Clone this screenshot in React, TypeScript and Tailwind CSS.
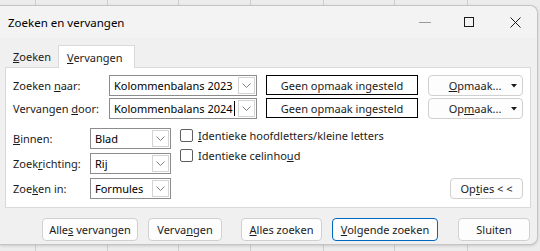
import React from "react";

const Chevron = () => (
  <svg width="9" height="5" viewBox="0 0 9 5">
    <path d="M0.5 0.5 L4.5 4.5 L8.5 0.5" fill="none" stroke="#808080" strokeWidth="1" />
  </svg>
);

function Combo({ value, className, caret }: { value: string; className: string; caret?: boolean }) {
  return (
    <div className={`flex h-[21px] border border-[#8c8c8c] bg-white ${className}`}>
      <div className="flex flex-1 items-center pl-[4px] text-black">
        <span className="whitespace-nowrap">{value}</span>
        {caret && <span className="ml-[1px] h-[15px] w-px bg-black" />}
      </div>
      <div className="my-px mr-px flex w-[17px] items-center justify-center border border-[#d4d4d4] bg-white">
        <Chevron />
      </div>
    </div>
  );
}

function Btn({ children, className }: { children: React.ReactNode; className: string }) {
  return (
    <div className={`flex h-[23px] items-center justify-center rounded-[4px] border bg-[#fdfdfd] ${className}`}>
      {children}
    </div>
  );
}

function Check({ children }: { children: React.ReactNode }) {
  return (
    <div className="flex h-[20px] items-center">
      <div className="h-[13px] w-[13px] rounded-[2px] border border-[#5f5f5f] bg-white" />
      <span className="ml-[5px] whitespace-nowrap">{children}</span>
    </div>
  );
}

export default function App() {
  return (
    <div className="relative h-[251px] w-[540px] overflow-hidden bg-[#ececec] font-['Noto_Sans',sans-serif] text-[11px] leading-none text-[#1b1b1b]">
      <div className="absolute inset-0 flex">
        <div className="h-full w-[36px] border-r border-[#cdcdcd]" />
        <div className="h-full w-[72px] border-r border-[#cdcdcd]" />
        <div className="h-full w-[71px] border-r border-[#cdcdcd]" />
        <div className="h-full w-[72px] border-r border-[#cdcdcd]" />
        <div className="h-full w-[73px] border-r border-[#cdcdcd]" />
        <div className="h-full w-[71px] border-r border-[#cdcdcd]" />
        <div className="h-full w-[73px] border-r border-[#cdcdcd]" />
      </div>

      <div className="absolute left-0 top-[5px] flex h-[240px] w-[538px] flex-col rounded-r-[8px] border border-l-0 border-[#c4c4c4] bg-[#f0f0f0] shadow-[0_1px_3px_rgba(0,0,0,0.15)]">
        {/* title bar */}
        <div className="flex h-[32px] shrink-0 items-center rounded-tr-[8px] bg-[#f3f3f3]">
          <span className="ml-[8px] mt-[1px] text-[11.5px] text-black">Zoeken en vervangen</span>
          <div className="ml-auto flex items-center">
            <div className="mr-[33px] h-px w-[12px] bg-[#9a9a9a]" />
            <div className="mr-[36px] h-[10px] w-[10px] border border-[#1b1b1b]" />
            <svg width="11" height="11" viewBox="0 0 11 11" className="mr-[16px]">
              <path d="M0.5 0.5 L10.5 10.5 M10.5 0.5 L0.5 10.5" stroke="#1b1b1b" strokeWidth="1" />
            </svg>
          </div>
        </div>

        {/* tabs */}
        <div className="mt-[6px] flex h-[23px] items-end pl-[5px]">
          <div className="flex h-[22px] w-[53px] items-center pl-[8px]">
            <span><u>Z</u>oeken</span>
          </div>
          <div className="relative z-10 -mb-px flex h-[23px] w-[77px] items-center border border-b-0 border-[#d9d9d9] bg-white pl-[8px]">
            <span><u>V</u>ervangen</span>
          </div>
        </div>

        {/* panel */}
        <div className="mx-[5px] flex h-[141px] w-[526px] flex-col border border-[#d9d9d9] bg-white pl-[7px] pt-[7px]">
          <div className="flex h-[21px] items-center">
            <span className="w-[96px]">Zoeken <u>n</u>aar:</span>
            <Combo value="Kolommenbalans 2023" className="w-[148px]" />
            <div className="ml-[9px] flex h-[20px] w-[152px] items-center justify-center self-start border border-black">
              <span>Geen opmaak ingesteld</span>
            </div>
            <Btn className="ml-[10px] w-[95px] border-[#d0d0d0] !h-[21px]">
              <span className="flex-1 pl-[10px] text-center"><u>O</u>pmaak...</span>
              <svg width="6" height="4" viewBox="0 0 6 4" className="mr-[5px]">
                <path d="M0 0 L6 0 L3 3.5 Z" fill="#1b1b1b" />
              </svg>
            </Btn>
          </div>
          <div className="mt-[2px] flex h-[21px] items-center">
            <span className="w-[96px]">Vervangen <u>d</u>oor:</span>
            <Combo value="Kolommenbalans 2024" className="w-[148px]" caret />
            <div className="ml-[9px] flex h-[20px] w-[152px] items-center justify-center self-start border border-black">
              <span>Geen opmaak ingesteld</span>
            </div>
            <Btn className="ml-[10px] w-[95px] border-[#d0d0d0] !h-[21px]">
              <span className="flex-1 pl-[10px] text-center">Op<u>m</u>aak...</span>
              <svg width="6" height="4" viewBox="0 0 6 4" className="mr-[5px]">
                <path d="M0 0 L6 0 L3 3.5 Z" fill="#1b1b1b" />
              </svg>
            </Btn>
          </div>

          <div className="mt-[9px] flex">
            <div className="flex flex-col gap-[4px]">
              <div className="flex items-center">
                <span className="w-[77px]"><u>B</u>innen:</span>
                <Combo value="Blad" className="w-[81px]" />
              </div>
              <div className="flex items-center">
                <span className="w-[77px]">Zoek<u>r</u>ichting:</span>
                <Combo value="Rij" className="w-[81px]" />
              </div>
              <div className="flex items-center">
                <span className="w-[77px]">Zoe<u>k</u>en in:</span>
                <Combo value="Formules" className="w-[81px]" />
              </div>
            </div>
            <div className="-mt-[3px] ml-[9px] flex flex-col">
              <Check><u>I</u>dentieke hoofdletters/kleine letters</Check>
              <Check>Identieke celinho<u>u</u>d</Check>
            </div>
            <Btn className="ml-auto mr-[7px] self-end !h-[21px] w-[73px] border-[#d0d0d0]">
              <span>Op<u>t</u>ies &lt; &lt;</span>
            </Btn>
          </div>
        </div>

        {/* bottom buttons */}
        <div className="ml-[42px] mt-[10px] flex">
          <Btn className="w-[96px] border-[#d0d0d0]"><span>Alle<u>s</u> vervangen</span></Btn>
          <Btn className="ml-[10px] w-[74px] border-[#d0d0d0]"><span>Verva<u>n</u>gen</span></Btn>
          <Btn className="ml-[19px] w-[81px] border-[#d0d0d0]"><span><u>A</u>lles zoeken</span></Btn>
          <Btn className="ml-[10px] w-[106px] border-[#0067c0]"><span><u>V</u>olgende zoeken</span></Btn>
          <Btn className="ml-[20px] w-[72px] border-[#d0d0d0]"><span>Sluiten</span></Btn>
        </div>
      </div>
    </div>
  );
}
